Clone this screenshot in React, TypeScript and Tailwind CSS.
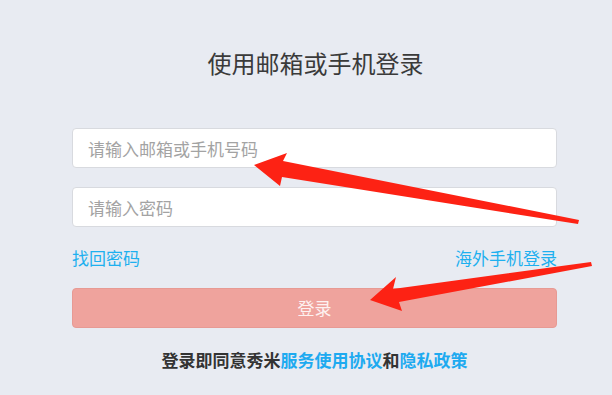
import React from 'react';

const font = { fontFamily: '"Noto Sans CJK SC", "Noto Sans", sans-serif' };

function Arrows() {
  return (
    <svg className="absolute left-0 top-0 pointer-events-none" width="612" height="395" viewBox="0 0 612 395">
      <polygon
        fill="#fd2214"
        points="254,165 287,153 283,161 579,220 578,224 282,177 280,186"
      />
      <polygon
        fill="#fd2214"
        points="370,300 396,277 393,289 591,262 592,266 399,302 402,311"
      />
    </svg>
  );
}

export default function App() {
  return (
    <div className="relative w-[612px] h-[395px] overflow-hidden bg-[#e8ebf2]" style={font}>
      <div className="flex flex-col w-[485px] ml-[72px]">
        <h1 className="text-center text-[24px] leading-[32px] text-[#3a3a3a] mt-[47px] pl-[2px]">
          使用邮箱或手机登录
        </h1>

        <input
          className="mt-[49px] h-[40px] rounded-[4px] border border-[#d8dadf] bg-white px-[15px] text-[17px] text-[#333] placeholder:text-[#a3a3a3] outline-none"
          placeholder="请输入邮箱或手机号码"
        />
        <input
          type="password"
          className="mt-[19px] h-[40px] rounded-[4px] border border-[#d8dadf] bg-white px-[15px] text-[17px] text-[#333] placeholder:text-[#a3a3a3] outline-none"
          placeholder="请输入密码"
        />

        <div className="flex justify-between items-center mt-[18px] h-[26px] text-[17px] text-[#1eb0ef]">
          <span>找回密码</span>
          <span>海外手机登录</span>
        </div>

        <button className="mt-[17px] h-[40px] rounded-[4px] border border-[#e79a94] bg-[#efa39d] text-[17px] text-[#fdf1f0]">
          登录
        </button>

        <p className="mt-[20px] text-center text-[17px] leading-[24px] font-bold text-[#333]">
          登录即同意秀米<span className="text-[#1eaaf0]">服务使用协议</span>和<span className="text-[#1eaaf0]">隐私政策</span>
        </p>
      </div>
      <Arrows />
    </div>
  );
}
